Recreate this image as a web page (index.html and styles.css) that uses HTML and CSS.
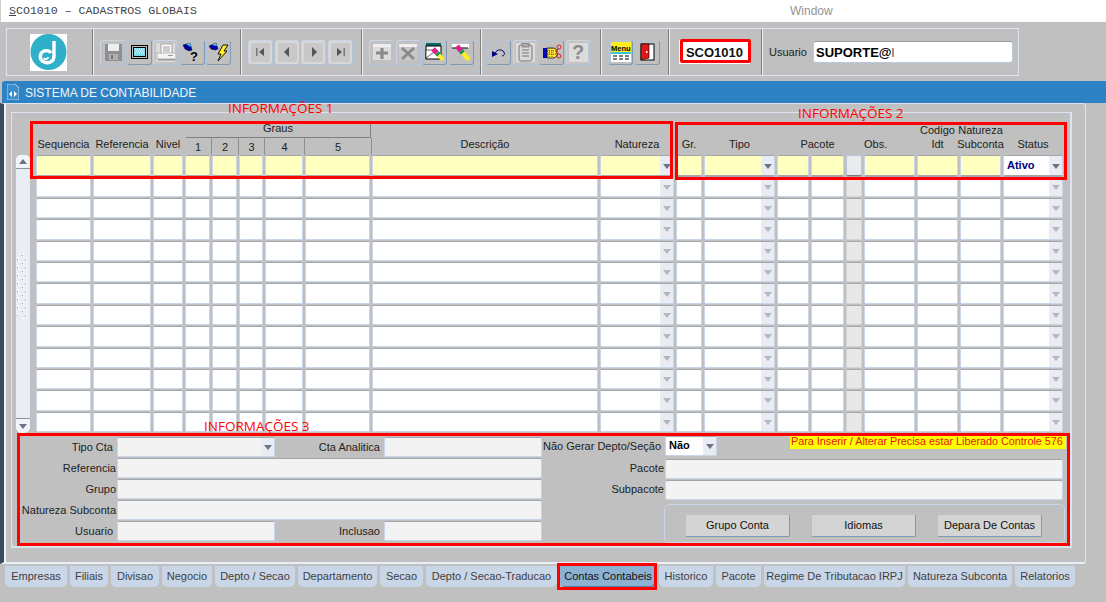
FILE: index.html
```html
<!DOCTYPE html>
<html lang="pt">
<head>
<meta charset="utf-8">
<title>SCO1010 - CADASTROS GLOBAIS</title>
<link rel="stylesheet" href="styles.css">
</head>
<body>
<div class="page">
  <header class="titlebar"><span class="title"><u>S</u>CO1010 – CADASTROS GLOBAIS</span><span class="menu-window">Window</span></header>

  <div class="toolbar">
    <div class="frame">
      <div class="group g-logo">
        <svg class="logo" viewBox="0 0 37 37" width="37" height="37"><rect width="37" height="37" fill="#fff"/><circle cx="18.5" cy="18" r="18" fill="#2fb0c8"/><path d="M24 7V22C24 28 18 30 14 28C9 26 9 19 14 17C17 16 20 17 21 19" fill="none" stroke="#fff" stroke-width="3.4"/><path d="M14 24C15 26 18 25 18 23" fill="none" stroke="#fff" stroke-width="2"/></svg>
      </div>
      <div class="group g-a">
        <button class="tool off"><svg viewBox="0 0 20 20"><rect x="2" y="2" width="17" height="17" fill="#8f8f8f"/><rect x="5" y="2" width="11" height="7" fill="#eee"/><rect x="6" y="12" width="9" height="6" fill="#b0b0b0"/><rect x="8" y="13" width="2" height="4" fill="#777"/></svg></button>
        <button class="tool"><svg viewBox="0 0 20 20"><rect x="2" y="3" width="17" height="14" fill="#000"/><rect x="3" y="4" width="15" height="12" fill="#c0c0c0"/><rect x="4" y="5" width="13" height="10" fill="#000"/><rect x="5" y="6" width="11" height="8" fill="#7fd6e8"/><path d="M6 7h1M8 7h1M10 7h1M12 7h1M14 7h1M7 9h1M9 9h1M11 9h1M13 9h1M6 11h1M8 11h1M10 11h1M12 11h1M14 11h1" stroke="#fff"/></svg></button>
        <button class="tool off lit"><svg viewBox="0 0 20 20"><rect x="5" y="2" width="11" height="10" fill="#fff" stroke="#a0a0a0"/><path d="M7 5h7M7 7h7M7 9h7" stroke="#999"/><rect x="1" y="11" width="19" height="6" fill="#f4f4f4" stroke="#b4b4b4"/><rect x="12" y="13" width="5" height="1" fill="#999"/><rect x="2" y="17" width="17" height="1.500" fill="#9a9a9a"/></svg></button>
        <button class="tool"><svg viewBox="0 0 20 20"><path d="M1 3L8 1L10 8L7 9L3 7Z" fill="#00a" stroke="#000" stroke-width=".5"/><path d="M4 2L8 1L9 5Z" fill="#4fd0e8"/><path d="M11 12h8M9 14h2M18 14h2M11 16h8M9 18h2M18 18h2" stroke="#f5e23a" stroke-dasharray="1 1"/><text x="12" y="18.500" class="svgq">?</text></svg></button>
        <button class="tool"><svg viewBox="0 0 20 20"><path d="M0 4L7 1L9 7L6 8L2 7Z" fill="#00a" stroke="#000" stroke-width=".5"/><path d="M3 3L7 1L8 4Z" fill="#4fd0e8"/><path d="M14 3H19L15 9H18L9 19L12 12H9Z" fill="#ffee22" stroke="#000" stroke-width=".9"/></svg></button>
      </div>
      <div class="group g-b">
        <button class="tool off lit nav"><svg viewBox="0 0 20 20"><rect x="5" y="6" width="1.500" height="8" fill="#777"/><path d="M8 10L13 6V14Z" fill="#555"/></svg></button>
        <button class="tool off lit nav"><svg viewBox="0 0 20 20"><path d="M7 10L12 5V15Z" fill="#555"/></svg></button>
        <button class="tool off lit nav"><svg viewBox="0 0 20 20"><path d="M13 10L8 5V15Z" fill="#555"/></svg></button>
        <button class="tool off lit nav"><svg viewBox="0 0 20 20"><rect x="13.500" y="6" width="1.500" height="8" fill="#777"/><path d="M12 10L7 6V14Z" fill="#555"/></svg></button>
      </div>
      <div class="group g-c">
        <button class="tool off"><svg viewBox="0 0 20 20"><rect x="1" y="2" width="18" height="5" fill="#eee"/><rect x="1" y="5" width="18" height="13" fill="#ddd"/><path d="M10 6V17M4 11H16" stroke="#8a8a8a" stroke-width="3.200"/></svg></button>
        <button class="tool off"><svg viewBox="0 0 20 20"><rect x="1" y="2" width="18" height="3" fill="#eee"/><rect x="1" y="5" width="18" height="13" fill="#c8c8c8"/><path d="M4 6L16 17M16 6L4 17" stroke="#8a8a8a" stroke-width="3"/></svg></button>
        <button class="tool"><svg viewBox="0 0 20 20"><rect x="1" y="1" width="15" height="3" fill="#0a6a6a"/><rect x="1" y="4" width="15" height="13" fill="#fff" stroke="#000"/><path d="M1 8L12 8L1 16Z" fill="#fff" stroke="#000" stroke-width=".6"/><path d="M8 7L12 11" stroke="#e0208a" stroke-width="5"/><path d="M12 11L14 13" stroke="#119944" stroke-width="5"/><path d="M14 13L18 18" stroke="#ffee22" stroke-width="4"/></svg></button>
        <button class="tool"><svg viewBox="0 0 20 20"><rect x="1" y="2" width="17" height="4" fill="#fff"/><path d="M1 6H17" stroke="#000"/><path d="M6 4L10 9" stroke="#e0208a" stroke-width="5"/><path d="M10 9L12 11" stroke="#119944" stroke-width="5"/><path d="M12 11L18 18" stroke="#ffee22" stroke-width="4.500"/></svg></button>
      </div>
      <div class="group g-d">
        <button class="tool"><svg viewBox="0 0 20 20"><path d="M6 11C8 7 13 7 15 10C16 12 15 14 13 14" fill="none" stroke="#00007f"/><path d="M3 9L9 12L3 15Z" fill="#00007f"/></svg></button>
        <button class="tool off lit"><svg viewBox="0 0 20 20"><rect x="4" y="3" width="13" height="16" fill="#d8d8d8" stroke="#777" rx="2"/><rect x="7" y="1.500" width="7" height="3.500" fill="#aaa" stroke="#777" stroke-width=".7"/><path d="M7 8h7M7 11h7M7 14h7" stroke="#777"/></svg></button>
        <button class="tool"><svg viewBox="0 0 20 20"><rect x="1" y="6" width="4" height="10" fill="#00c"/><path d="M5 6H12L15 8V14L12 16H5Z" fill="#ffe23a" stroke="#000" stroke-width=".7"/><path d="M7 6v9M10 6v9M5 9h9M5 12h9" stroke="#000" stroke-width=".6" stroke-dasharray="1 1"/><circle cx="17" cy="5" r="2" fill="none" stroke="#e02020"/><circle cx="17" cy="14" r="2" fill="none" stroke="#e02020"/><path d="M16 7L14 10L16 12" fill="none" stroke="#e02020"/></svg></button>
        <button class="tool off lit"><svg viewBox="0 0 20 20"><text x="10" y="17" class="svgq grey">?</text></svg></button>
      </div>
      <div class="group g-e">
        <button class="tool"><svg viewBox="0 0 20 20"><rect width="20" height="10" fill="#ffee22"/><text x="0" y="8.500" class="svgmenu">Menu</text><rect y="10" width="20" height="10" fill="#fff"/><rect y="10" width="20" height="2" fill="#2fc8e0"/><path d="M2 14h4M8 14h4M14 14h4M2 17h4M8 17h4M14 17h4" stroke="#000"/></svg></button>
        <button class="tool"><svg viewBox="0 0 20 20"><rect x="4" y="2" width="13" height="16" fill="#fff" stroke="#000"/><path d="M4 2L12 2V16L4 18Z" fill="#e01818" stroke="#000" stroke-width=".6"/><rect x="9" y="9" width="1.500" height="2" fill="#ffe"/></svg></button>
      </div>
      <div class="group g-f"><div class="code">SCO1010</div></div>
      <div class="group g-user"><label class="user-label">Usuario</label><div class="user-field">SUPORTE@<span class="cut">l</span></div></div>
    </div>
  </div>

  <div class="banner">
    <svg class="banner-icon" viewBox="0 0 12 16" width="12" height="16"><path d="M0 0H8L12 4V16H0Z" fill="#3b8dcc" stroke="#bcd6ec"/><path d="M2 10L5 7V13ZM10 10L7 7V13Z" fill="#fff"/></svg>
    <span class="banner-text">SISTEMA DE CONTABILIDADE</span>
  </div>

  <main class="workspace">
    <section class="panel">
      <div class="heads">
        <div class="h-label h2">Sequencia</div>
        <div class="h-label h2">Referencia</div>
        <div class="h-label h2">Nivel</div>
        <div class="h-graus">Graus</div>
        <div class="h-label h-col h-num">1</div>
        <div class="h-label h-col h-num">2</div>
        <div class="h-label h-col h-num">3</div>
        <div class="h-label h-col h-num">4</div>
        <div class="h-label h-col h-num">5</div>
        <div class="h-label h2">Descrição</div>
        <div class="h-label h2">Natureza</div>
        <div class="h-label h2">Gr.</div>
        <div class="h-label h2">Tipo</div>
        <div class="h-label h2 h-pacote">Pacote</div>
        <div class="h-label h2 h-obs">Obs.</div>
        <div class="h-label h2 h-tall">Codigo<br>Idt</div>
        <div class="h-label h2 h-tall">Natureza<br>Subconta</div>
        <div class="h-label h2">Status</div>
      </div>

      <div class="body">
        <div class="scrollbar">
          <div class="sb-up"><span class="tri-up"></span></div>
          <svg class="sb-grip" width="14" height="66" viewBox="0 0 14 66"><defs><pattern id="grip" width="8" height="8" patternUnits="userSpaceOnUse"><rect x="1" y="5" width="2" height="2" fill="#fff"/><rect x="1" y="6" width="1" height="1" fill="#7f9cc8"/><rect x="6" y="1" width="2" height="2" fill="#fff"/><rect x="6" y="2" width="1" height="1" fill="#7f9cc8"/></pattern></defs><rect width="14" height="66" fill="url(#grip)"/></svg>
          <div class="sb-down"><span class="tri-down"></span></div>
        </div>
        <div class="rows">
          <div class="row active"><div class="cell"></div><div class="cell"></div><div class="cell"></div><div class="cell"></div><div class="cell"></div><div class="cell"></div><div class="cell"></div><div class="cell"></div><div class="cell"></div><div class="cell sel"></div><div class="cell"></div><div class="cell sel"></div><div class="cell"></div><div class="cell"></div><div class="cell btn"></div><div class="cell"></div><div class="cell"></div><div class="cell"></div><div class="cell sel white"><span class="ativo">Ativo</span></div></div>
          <div class="row"><div class="cell"></div><div class="cell"></div><div class="cell"></div><div class="cell"></div><div class="cell"></div><div class="cell"></div><div class="cell"></div><div class="cell"></div><div class="cell"></div><div class="cell sel"></div><div class="cell"></div><div class="cell sel"></div><div class="cell"></div><div class="cell"></div><div class="cell btn"></div><div class="cell"></div><div class="cell"></div><div class="cell"></div><div class="cell sel"></div></div>
          <div class="row"><div class="cell"></div><div class="cell"></div><div class="cell"></div><div class="cell"></div><div class="cell"></div><div class="cell"></div><div class="cell"></div><div class="cell"></div><div class="cell"></div><div class="cell sel"></div><div class="cell"></div><div class="cell sel"></div><div class="cell"></div><div class="cell"></div><div class="cell btn"></div><div class="cell"></div><div class="cell"></div><div class="cell"></div><div class="cell sel"></div></div>
          <div class="row"><div class="cell"></div><div class="cell"></div><div class="cell"></div><div class="cell"></div><div class="cell"></div><div class="cell"></div><div class="cell"></div><div class="cell"></div><div class="cell"></div><div class="cell sel"></div><div class="cell"></div><div class="cell sel"></div><div class="cell"></div><div class="cell"></div><div class="cell btn"></div><div class="cell"></div><div class="cell"></div><div class="cell"></div><div class="cell sel"></div></div>
          <div class="row"><div class="cell"></div><div class="cell"></div><div class="cell"></div><div class="cell"></div><div class="cell"></div><div class="cell"></div><div class="cell"></div><div class="cell"></div><div class="cell"></div><div class="cell sel"></div><div class="cell"></div><div class="cell sel"></div><div class="cell"></div><div class="cell"></div><div class="cell btn"></div><div class="cell"></div><div class="cell"></div><div class="cell"></div><div class="cell sel"></div></div>
          <div class="row"><div class="cell"></div><div class="cell"></div><div class="cell"></div><div class="cell"></div><div class="cell"></div><div class="cell"></div><div class="cell"></div><div class="cell"></div><div class="cell"></div><div class="cell sel"></div><div class="cell"></div><div class="cell sel"></div><div class="cell"></div><div class="cell"></div><div class="cell btn"></div><div class="cell"></div><div class="cell"></div><div class="cell"></div><div class="cell sel"></div></div>
          <div class="row"><div class="cell"></div><div class="cell"></div><div class="cell"></div><div class="cell"></div><div class="cell"></div><div class="cell"></div><div class="cell"></div><div class="cell"></div><div class="cell"></div><div class="cell sel"></div><div class="cell"></div><div class="cell sel"></div><div class="cell"></div><div class="cell"></div><div class="cell btn"></div><div class="cell"></div><div class="cell"></div><div class="cell"></div><div class="cell sel"></div></div>
          <div class="row"><div class="cell"></div><div class="cell"></div><div class="cell"></div><div class="cell"></div><div class="cell"></div><div class="cell"></div><div class="cell"></div><div class="cell"></div><div class="cell"></div><div class="cell sel"></div><div class="cell"></div><div class="cell sel"></div><div class="cell"></div><div class="cell"></div><div class="cell btn"></div><div class="cell"></div><div class="cell"></div><div class="cell"></div><div class="cell sel"></div></div>
          <div class="row"><div class="cell"></div><div class="cell"></div><div class="cell"></div><div class="cell"></div><div class="cell"></div><div class="cell"></div><div class="cell"></div><div class="cell"></div><div class="cell"></div><div class="cell sel"></div><div class="cell"></div><div class="cell sel"></div><div class="cell"></div><div class="cell"></div><div class="cell btn"></div><div class="cell"></div><div class="cell"></div><div class="cell"></div><div class="cell sel"></div></div>
          <div class="row"><div class="cell"></div><div class="cell"></div><div class="cell"></div><div class="cell"></div><div class="cell"></div><div class="cell"></div><div class="cell"></div><div class="cell"></div><div class="cell"></div><div class="cell sel"></div><div class="cell"></div><div class="cell sel"></div><div class="cell"></div><div class="cell"></div><div class="cell btn"></div><div class="cell"></div><div class="cell"></div><div class="cell"></div><div class="cell sel"></div></div>
          <div class="row"><div class="cell"></div><div class="cell"></div><div class="cell"></div><div class="cell"></div><div class="cell"></div><div class="cell"></div><div class="cell"></div><div class="cell"></div><div class="cell"></div><div class="cell sel"></div><div class="cell"></div><div class="cell sel"></div><div class="cell"></div><div class="cell"></div><div class="cell btn"></div><div class="cell"></div><div class="cell"></div><div class="cell"></div><div class="cell sel"></div></div>
          <div class="row"><div class="cell"></div><div class="cell"></div><div class="cell"></div><div class="cell"></div><div class="cell"></div><div class="cell"></div><div class="cell"></div><div class="cell"></div><div class="cell"></div><div class="cell sel"></div><div class="cell"></div><div class="cell sel"></div><div class="cell"></div><div class="cell"></div><div class="cell btn"></div><div class="cell"></div><div class="cell"></div><div class="cell"></div><div class="cell sel"></div></div>
          <div class="row"><div class="cell"></div><div class="cell"></div><div class="cell"></div><div class="cell"></div><div class="cell"></div><div class="cell"></div><div class="cell"></div><div class="cell"></div><div class="cell"></div><div class="cell sel"></div><div class="cell"></div><div class="cell sel"></div><div class="cell"></div><div class="cell"></div><div class="cell btn"></div><div class="cell"></div><div class="cell"></div><div class="cell"></div><div class="cell sel"></div></div>
        </div>
      </div>

      <div class="details">
        <div class="left-form">
          <label class="lbl short">Tipo Cta</label><div class="field sel enabled-arrow"></div><label class="lbl">Cta Analitica</label><div class="field"></div>
          <label class="lbl">Referencia</label><div class="field wide"></div>
          <label class="lbl">Grupo</label><div class="field wide"></div>
          <label class="lbl">Natureza Subconta</label><div class="field wide"></div>
          <label class="lbl short">Usuario</label><div class="field"></div><label class="lbl">Inclusao</label><div class="field"></div>
        </div>
        <div class="right-form">
          <div class="rf-row rf-first"><label class="lbl">Não Gerar Depto/Seção</label><div class="field sel white enabled-arrow small"><span class="nao">Não</span></div></div>
          <div class="rf-row"><label class="lbl">Pacote</label><div class="field grow"></div></div>
          <div class="rf-row"><label class="lbl">Subpacote</label><div class="field grow"></div></div>
          <div class="actions">
            <button class="action">Grupo Conta</button>
            <button class="action">Idiomas</button>
            <button class="action">Depara De Contas</button>
          </div>
        </div>
        <div class="notice">Para Inserir / Alterar Precisa estar Liberado Controle 576</div>
      </div>
    </section>
  </main>

  <nav class="tabs">
    <a class="tab">Empresas</a>
    <a class="tab">Filiais</a>
    <a class="tab">Divisao</a>
    <a class="tab">Negocio</a>
    <a class="tab">Depto / Secao</a>
    <a class="tab">Departamento</a>
    <a class="tab">Secao</a>
    <a class="tab">Depto / Secao-Traducao</a>
    <a class="tab current">Contas Contabeis</a>
    <a class="tab">Historico</a>
    <a class="tab">Pacote</a>
    <a class="tab">Regime De Tributacao IRPJ</a>
    <a class="tab">Natureza Subconta</a>
    <a class="tab">Relatorios</a>
  </nav>

  <div class="mark mark-code"></div>
  <div class="mark mark-1"></div>
  <div class="mark mark-2"></div>
  <div class="mark mark-3"></div>
  <div class="mark mark-tab"></div>
  <span class="note note-1">INFORMAÇÕES 1</span>
  <span class="note note-2">INFORMAÇÕES 2</span>
  <span class="note note-3">INFORMAÇÕES 3</span>
</div>
</body>
</html>
```

FILE: styles.css
```css
* { box-sizing: border-box; }
html, body { margin: 0; padding: 0; }
body { overflow: hidden; background: #c0c0c0; }

.page {
  --cols: 57px 60px 32px 27px 27px 26px 40px 67px 228px 76px 28px 73px 34px 35px 18px 53px 43px 43px 62px;
  position: relative;
  width: 1106px;
  height: 602px;
  overflow: hidden;
  background: #c0c0c0;
  color: #222;
  font: 11px/1 "Liberation Sans", Arial, sans-serif;
}

/* Title bar */
.titlebar {
  display: flex;
  align-items: center;
  height: 22px;
  padding: 0 0 1px 8px;
  background: #fff;
  border-left: 1px solid #d0d0d0;
}
.title {
  width: 781px;
  flex: none;
  font: 11.6px/1 "Liberation Mono", "Courier New", monospace;
  color: #444;
}
.menu-window { font-size: 12px; color: #939393; }

/* Toolbar */
.toolbar { height: 59px; padding: 6px 0 0 6px; }
.frame {
  display: flex;
  width: 1013px;
  height: 48px;
  border: 1px solid #dbe4f0;
}
.group {
  display: flex;
  align-items: center;
  flex: none;
  gap: 1.600px;
  padding-left: 7px;
  border-right: 1px solid #7f7f7f;
  box-shadow: 1px 0 0 #eef2f8;
}
.g-logo { width: 86px; padding-left: 23px; padding-top: 1px; }
.g-a { width: 148px; }
.g-b { width: 121px; }
.g-c { width: 119px; }
.g-d { width: 120px; padding-left: 5px; }
.g-e { width: 68px; }
.g-f { width: 93px; padding-left: 10px; }
.g-user { flex: 1; border-right: 0; box-shadow: none; padding-left: 7px; gap: 7px; }

.tool {
  display: flex;
  align-items: center;
  justify-content: center;
  width: 25px;
  height: 25px;
  padding: 0;
  background: #c0c0c0;
  border: 1px solid #b5c4d6;
  border-right-color: #7f9ab5;
  border-bottom-color: #7f9ab5;
  border-radius: 3px;
}
.tool svg { width: 20px; height: 20px; display: block; overflow: visible; }
.tool.off { border-color: #cbd6e4; border-right-color: #b4c4d8; border-bottom-color: #b4c4d8; }
.tool.lit { background: #dcdcdc; box-shadow: inset 0 0 0 2px #c4c4c4; }
.tool.nav { background: #c8c8c8; box-shadow: inset 0 0 0 2px #d8d8d8; }
.logo { display: block; }
.svgq { font: bold 13px "Liberation Sans", sans-serif; fill: #000; text-anchor: middle; }
.svgq.grey { font-size: 20px; fill: #8c8c8c; }
.svgmenu { font: bold 7.500px "Liberation Sans", sans-serif; fill: #000; }

.code {
  display: flex;
  align-items: center;
  justify-content: center;
  width: 71px;
  height: 24px;
  background: #fff;
  color: #111;
  font-size: 13px;
  font-weight: bold;
}
.user-label { width: 37px; color: #222; }
.user-field {
  display: flex;
  align-items: center;
  width: 200px;
  height: 22px;
  padding: 0 2px;
  background: #fff;
  border: 1px solid #b9c9dc;
  border-top-color: #9b9b9b;
  border-radius: 3px;
  color: #000;
  font-size: 13px;
  font-weight: bold;
}
.cut { font-weight: normal; color: #555; }

/* Banner */
.banner {
  display: flex;
  align-items: center;
  height: 22px;
  margin-left: 2px;
  padding-left: 5px;
  background: #2d82c4;
  border-top-left-radius: 3px;
}
.banner-icon { display: block; flex: none; }
.banner-text {
  margin-left: 6px;
  padding-top: 1px;
  color: #f2f6fb;
  font-size: 12px;
}

/* Workspace */
.workspace {
  width: 1086px;
  height: 461px;
  padding: 8px 13px 0 7px;
  border-left: 4px solid #3c4c60;
  border-right: 1px solid #dbe4f0;
  border-bottom: 2px solid #e8eef6;
  border-top: 1px solid #dbe4f0;
  border-bottom-right-radius: 3px;
  border-top-right-radius: 3px;
  background: linear-gradient(#f0f4f9, #f0f4f9) left top / 2px 100% no-repeat #c0c0c0;
}
.panel {
  position: relative;
  width: 1061px;
  height: 436px;
  padding: 9px 0 0 4px;
  border: 1px solid #dbe4f0;
  border-right-width: 2px;
  border-bottom-width: 2px;
}

/* Grid header */
.heads {
  display: grid;
  grid-template-columns: var(--cols);
  grid-template-rows: 16px 17px;
  margin-left: 20px;
  text-align: center;
}
.h-label {
  display: flex;
  align-items: flex-end;
  justify-content: center;
  padding-bottom: 4px;
  margin-right: 2px;
  line-height: 14px;
  color: #222;
}
.h2 { grid-row: 1 / span 2; }
.h-graus {
  grid-column: 4 / span 5;
  grid-row: 1;
  margin-left: 1px;
  margin-right: 1px;
  border-top: 1px solid #808080;
  border-bottom: 1px solid #808080;
  border-right: 1px solid #808080;
}
.h-num {
  grid-row: 2;
  margin: 0;
  padding: 1px 0 0;
  align-items: center;
  border-right: 1px solid #909090;
}
.heads .h-pacote { grid-column: 13 / span 3; margin-right: 0; padding-right: 6px; }
.heads .h-obs { grid-column: 16; justify-content: flex-start; padding-left: 0; }
.h-tall { text-align: center; padding-bottom: 4px; }

/* Grid body */
.body { display: flex; }
.scrollbar {
  display: flex;
  flex-direction: column;
  flex: none;
  width: 14px;
  height: 278px;
  margin-right: 6px;
  background: #e9eef5;
  border-radius: 5px 5px 6px 6px;
}
.sb-up {
  display: flex;
  align-items: center;
  justify-content: center;
  height: 14px;
  border-bottom: 1px solid #8a94a4;
  background: #f1f4f9;
  border-radius: 5px 5px 0 0;
}
.sb-grip { display: block; margin-top: 84px; flex: none; }
.sb-down {
  display: flex;
  align-items: center;
  justify-content: center;
  height: 15px;
  margin-top: auto;
  border-top: 1px solid #8a94a4;
  background: #f1f4f9;
  border-radius: 0 0 6px 6px;
}
.tri-up { width: 0; height: 0; border: 4px solid transparent; border-top: 0; border-bottom: 5px solid #6d7484; }
.tri-down { width: 0; height: 0; border: 4px solid transparent; border-bottom: 0; border-top: 5px solid #6d7484; }

.rows { flex: none; }
.row {
  display: grid;
  grid-template-columns: var(--cols);
  height: 21.400px;
}
.cell {
  position: relative;
  height: 20.400px;
  margin-right: 2px;
  background: #fff;
  border: 1px solid #c9d6e8;
  border-top-color: #a3a6ab;
  border-radius: 2px;
}
.cell.btn { background: #e8e8e8; border-color: #cfd6df; border-top-color: #a8a8a8; }
.active .cell { background: #ffffc0; border-bottom-color: #a6a6a6; height: 21px; }
.active .cell.btn { background: #e8ebef; border-color: #b8c6d8; border-bottom-color: #6f7b8a; }
.active .cell.white { background: #fff; }
.cell.sel::after, .field.sel::after {
  content: "";
  position: absolute;
  top: 0;
  right: 0;
  bottom: 0;
  width: 13px;
  background: #e9edf3;
}
.cell.sel::before, .field.sel::before {
  content: "";
  position: absolute;
  z-index: 1;
  top: 50%;
  right: 2px;
  margin-top: -2px;
  border: 4px solid transparent;
  border-bottom: 0;
  border-top: 5px solid #b4b7bd;
}
.active .cell.sel::before, .enabled-arrow.sel::before { border-top-color: #6d7484; }
.ativo, .nao {
  display: block;
  padding: 4px 0 0 3px;
  font-weight: bold;
}
.ativo { color: #00007f; }
.nao { color: #000; padding-top: 3px; }

/* Detail form */
.details {
  position: relative;
  display: flex;
  height: 112px;
  margin-top: 4px;
}
.left-form {
  display: grid;
  grid-template-columns: 101px 158px 109px 158px;
  grid-auto-rows: 21px;
  flex: none;
  width: 526px;
}
.lbl {
  display: flex;
  align-items: center;
  justify-content: flex-end;
  height: 20px;
  padding-right: 1px;
  color: #222;
  white-space: nowrap;
}
.lbl.short { padding-right: 4px; }
.field {
  position: relative;
  height: 20px;
  background: #f3f3f3;
  border: 1px solid #c9d6e8;
  border-top-color: #a3a6ab;
  border-radius: 2px;
}
.left-form .lbl:nth-of-type(2), .left-form .lbl:nth-last-of-type(1) { padding-right: 4px; }
.field.wide { grid-column: 2 / span 3; }
.field.white { background: #fff; }
.field.small { width: 52px; flex: none; margin-top: -1px; }
.right-form {
  display: flex;
  flex-direction: column;
  flex: none;
  width: 520px;
  margin-left: 3px;
}
.rf-row { display: flex; align-items: flex-start; height: 21px; }
.rf-first { height: 21.500px; }
.rf-row .lbl { width: 120px; padding-right: 1px; flex: none; }
.field.grow { flex: none; width: 398px; }
.rf-first .lbl { margin-top: -1px; padding-right: 4px; }
.actions {
  display: flex;
  gap: 21px;
  width: 401px;
  height: 39px;
  margin: 3px 0 0 119px;
  padding: 9px 0 0 20px;
  border: 1px solid #c9d6e8;
  border-radius: 5px;
}
.action {
  width: 105px;
  height: 23px;
  padding: 0;
  background: #d4d4d4;
  border: 1px solid #b8bec6;
  border-right-color: #7f9ab5;
  border-bottom-color: #7f9ab5;
  border-radius: 2px;
  color: #111;
  font: 11px/1 "Liberation Sans", Arial, sans-serif;
}
.notice {
  position: absolute;
  top: -2px;
  left: 774px;
  width: 276px;
  height: 14px;
  padding: 1px 0 0 1px;
  background: #ffff00;
  color: #e81010;
  font-size: 10.800px;
  white-space: nowrap;
}

/* Tabs */
.tabs {
  display: grid;
  grid-template-columns: 65px 41px 51px 53px 83px 82px 46px 134px 99px 57px 48px 144px 107px 63px;
  height: 21px;
  margin: 2px 0 0 5px;
}
.tab {
  display: flex;
  align-items: center;
  justify-content: center;
  margin-right: 3px;
  background: #c9d6e8;
  border-radius: 0 0 5px 5px;
  color: #3f3f3f;
  font-size: 11px;
  white-space: nowrap;
}
.tab.current {
  background: #8db1d2;
  color: #111;
  box-shadow: inset -1px -1px 0 #5d7b99;
}

/* Review annotations laid over the screen */
.mark {
  position: absolute;
  border: 3px solid #f00;
  pointer-events: none;
}
.mark-code { left: 680px; top: 39px; width: 71px; height: 24px; border-radius: 2px; }
.mark-1 { left: 30px; top: 121px; width: 643px; height: 58px; }
.mark-2 { left: 675px; top: 122px; width: 392px; height: 58px; }
.mark-3 { left: 17px; top: 433px; width: 1053px; height: 113px; }
.mark-tab { left: 557px; top: 563px; width: 100px; height: 27px; }
.note {
  position: absolute;
  color: #f00;
  font: 13.500px/1 "Open Sans", sans-serif;
  white-space: nowrap;
}
.note-1 { left: 228px; top: 102px; }
.note-2 { left: 798px; top: 107px; }
.note-3 { left: 204px; top: 420px; }
```
